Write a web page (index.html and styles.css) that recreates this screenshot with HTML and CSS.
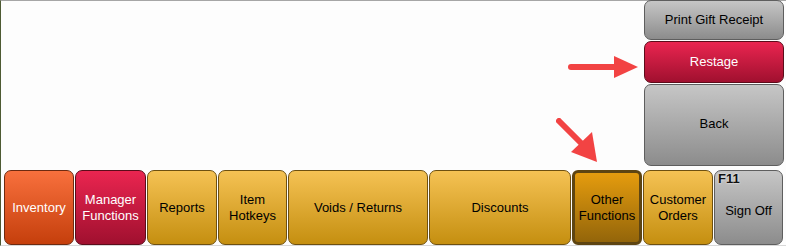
FILE: index.html
```html
<!DOCTYPE html>
<html>
<head>
<meta charset="utf-8">
<link rel="stylesheet" href="styles.css">
</head>
<body>
<div class="screen">
  <div class="top">
    <div class="spacer"></div>
    <div class="side">
      <div class="btn gray print">Print Gift Receipt</div>
      <div class="btn red restage">Restage</div>
      <div class="btn gray back">Back</div>
    </div>
  </div>
  <div class="bar">
    <div class="btn orange w70">Inventory</div>
    <div class="btn red w71">Manager<br>Functions</div>
    <div class="btn gold w70">Reports</div>
    <div class="btn gold w69">Item<br>Hotkeys</div>
    <div class="btn gold w140">Voids / Returns</div>
    <div class="btn gold w142">Discounts</div>
    <div class="btn dark w70">Other<br>Functions</div>
    <div class="btn gold w70">Customer<br>Orders</div>
    <div class="btn gray w69 signoff"><span class="key">F11</span>Sign Off</div>
  </div>
  <svg class="arrow a1" width="80" height="30" viewBox="0 0 80 30">
    <line x1="3" y1="12" x2="50" y2="12" stroke="#f24343" stroke-width="6" stroke-linecap="round"/>
    <polygon points="46,1 70,12 46,23" fill="#f24343"/>
  </svg>
  <svg class="arrow a2" width="50" height="50" viewBox="0 0 50 50">
    <line x1="3" y1="3" x2="27" y2="27" stroke="#f24343" stroke-width="6" stroke-linecap="round"/>
    <polygon points="15,34 36,14 41,44" fill="#f24343"/>
  </svg>
</div>
</body>
</html>
```
FILE: styles.css
```css
html, body {
  margin: 0;
  padding: 0;
  background: #fdfdfd;
}
.screen {
  position: relative;
  width: 786px;
  height: 246px;
  box-sizing: border-box;
  border-top: 1px solid #a6a6a6;
  border-left: 1px solid #4d5a33;
  border-bottom: 1px solid #d8d8d8;
  background: #fdfdfd;
  display: flex;
  flex-direction: column;
  font-family: "Liberation Sans", Arial, sans-serif;
  font-size: 13px;
}
.top {
  display: flex;
  height: 169px;
}
.spacer {
  flex: 1;
}
.side {
  width: 140px;
  margin-right: 2px;
  display: flex;
  flex-direction: column;
  gap: 1px;
}
.bar {
  display: flex;
  gap: 1px;
  padding-left: 3px;
  height: 75px;
}
.btn {
  box-sizing: border-box;
  border: 1px solid #5a5a5a;
  border-radius: 7px;
  display: flex;
  align-items: center;
  justify-content: center;
  text-align: center;
  line-height: 16px;
  color: #000;
}
.print { height: 40px; margin-top: -1px; }
.restage { height: 42px; }
.back { height: 82px; padding-bottom: 2px; }
.gray {
  background: linear-gradient(#c6c6c6, #8c8c8c);
  border-color: #5e5e5e;
}
.red {
  background: linear-gradient(#ea2550, #a0102f);
  border-color: #5c0c1a;
  color: #fff;
}
.orange {
  background: linear-gradient(#f8703d, #c53f0c);
  border-color: #6e2a10;
  color: #fff;
}
.gold {
  background: linear-gradient(#f5c254, #c58f10);
  border-color: #6e5010;
}
.dark {
  background: linear-gradient(#e59c0e, #93650a);
  border: 3px solid #5e4512;
  border-radius: 6px;
}
.w69 { width: 69px; }
.w70 { width: 70px; }
.w71 { width: 71px; }
.w140 { width: 140px; }
.w142 { width: 142px; }
.signoff {
  position: relative;
  padding-top: 6px;
}
.key {
  position: absolute;
  left: 3px;
  top: 1px;
  font-weight: bold;
  font-size: 13px;
  line-height: 14px;
  color: #111;
  text-shadow: 0 0 2px #e8e8e8, 0 0 2px #e8e8e8;
}
.arrow {
  position: absolute;
}
.a1 { left: 567px; top: 54px; }
.a2 { left: 555px; top: 117px; }
```
